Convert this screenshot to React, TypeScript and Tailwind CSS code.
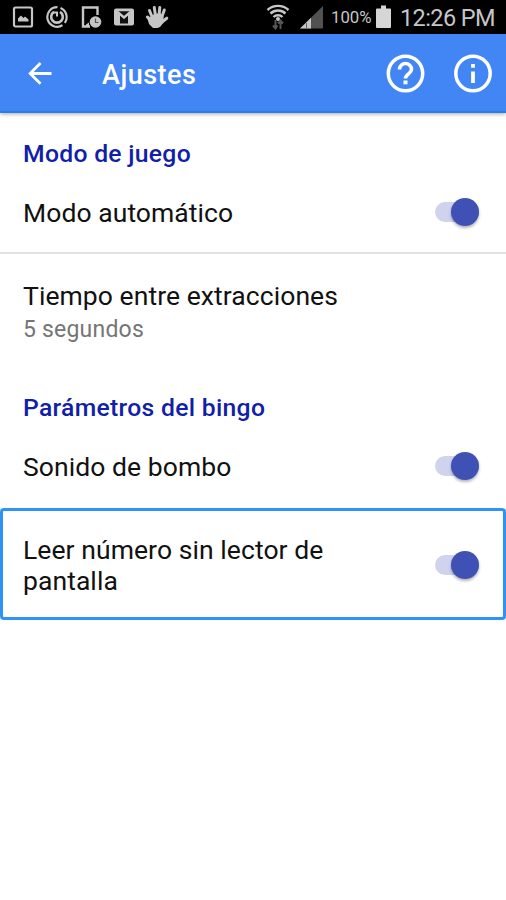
import React from 'react';

interface SwitchRowProps {
  label: string;
  className?: string;
}

const StatusBar: React.FC = () => (
  <div className="flex h-[34px] items-center bg-black pl-[12px] pr-[12px] text-[#c6c6c6]">
    <svg className="mr-[11px] h-[24px] w-[22px]" viewBox="0 0 22 24" fill="none">
      <rect x="2" y="2.5" width="18" height="19" rx="1.5" stroke="currentColor" strokeWidth="2.2" />
      <path d="M6 16.5v-3l3-3 2.5 2.5 1.5-1.5 3.5 3v2z" fill="currentColor" />
    </svg>
    <svg className="mr-[12px] h-[24px] w-[24px]" viewBox="0 0 24 24" fill="none" stroke="currentColor">
      <path d="M12.5 2.2A9.8 9.8 0 1 0 17.5 20.2" strokeWidth="2.2" />
      <path d="M15.5 3A9.8 9.8 0 0 1 19.8 17.8" strokeWidth="2.2" />
      <path d="M9 6.9A5.8 5.8 0 1 0 15 6.9" strokeWidth="2.6" />
      <path d="M8.5 7.5H13M12 6.5v5" strokeWidth="2" />
    </svg>
    <svg className="mr-[10px] h-[24px] w-[22px]" viewBox="0 0 22 24" fill="none">
      <path d="M16.5 10V2.5H2V21.5H9" stroke="currentColor" strokeWidth="2.4" />
      <path d="M5 19.5l3-2v4H5z" fill="currentColor" />
      <circle cx="14.5" cy="17" r="5.8" fill="currentColor" />
      <path d="M14.5 13.5v4h3" stroke="#555" strokeWidth="1.2" />
    </svg>
    <svg className="mr-[10px] h-[24px] w-[22px]" viewBox="0 0 22 24" fill="none">
      <rect x="1" y="3.5" width="20" height="17" rx="2" fill="currentColor" />
      <path d="M4 6.2h14L11 11.8z" fill="#111" />
      <path d="M7 10.5l4 3.5 4-3.500V18.500H7z" fill="#111" />
      <path d="M4 6.500l7 5.800 7-5.800" stroke="currentColor" strokeWidth="2.400" />
    </svg>
    <svg className="h-[24px] w-[24px]" viewBox="0 0 24 24" fill="none" stroke="currentColor" strokeLinecap="round">
      <path d="M7.5 13L4.5 5.5M10.5 11L9.3 2.5M14 11l.8-8.5M16.5 13l2.8-8M17 17l4.8-3.8M7 16l-4.600-4" strokeWidth="3" />
      <path d="M6 11.5l4-3h5.5l3 3v3l1 2-4.500 5.500-2.500 1h-4.500l-4-4-1.500-5z" fill="currentColor" stroke="none" />
    </svg>
    <svg className="ml-auto mr-[10px] h-[26px] w-[24px]" viewBox="0 0 24 26" fill="none">
      <path d="M1.5 6a15.5 15.5 0 0 1 21 0M4.5 9.5a11 11 0 0 1 15 0M7.5 13a6.5 6.5 0 0 1 9 0" stroke="currentColor" strokeWidth="2.4" />
      <circle cx="12" cy="15" r="2" fill="currentColor" />
      <path d="M9.5 16v8m-2.500-2.500l2.500 3 2-3M14.500 25v-8m-2.500 2.500l2.500-3 2.500 3" stroke="#555" strokeWidth="2" />
    </svg>
    <svg className="mr-[8px] h-[23px] w-[23px]" viewBox="0 0 23 23">
      <path d="M0 22.5L23 0v22.5z" fill="#515151" />
      <path d="M0 22.5L11 11.7v10.8z" fill="currentColor" />
      <path d="M6.5 17v5.5" stroke="#666" strokeWidth="1" />
    </svg>
    <span className="w-[45px] whitespace-nowrap pt-px text-[16.8px] leading-none">100%</span>
    <svg className="mr-[9px] h-[24px] w-[15px]" viewBox="0 0 15 24">
      <path d="M5 0.5h5v3h4a1 1 0 0 1 1 1V22a1 1 0 0 1-1 1H1a1 1 0 0 1-1-1V4.500a1 1 0 0 1 1-1h4z" fill="#d6d6d6" />
    </svg>
    <span className="w-[94px] whitespace-nowrap pt-[3px] text-[23.5px] leading-none tracking-[-0.6px]">12:26 PM</span>
  </div>
);

const Header: React.FC = () => (
  <header className="relative z-10 flex h-[79px] items-center border-b-2 border-[#2b7de0] bg-[#4285f4] pl-[28px] pr-[13px] text-white shadow-[0_1px_4px_rgba(0,0,0,0.35)]">
    <button aria-label="Volver">
      <svg className="h-[24px] w-[24px]" viewBox="0 0 24 24" fill="none" stroke="currentColor" strokeWidth="2.8">
        <path d="M23.5 12.5H3M12.5 2L2.2 12.5l10.3 10.3" />
      </svg>
    </button>
    <h1 className="ml-[50px] pt-[6px] text-[27px] font-medium leading-none tracking-[0.5px]">Ajustes</h1>
    <button aria-label="Ayuda" className="ml-auto">
      <svg className="h-[40px] w-[40px]" viewBox="0 0 40 40" fill="none" stroke="currentColor">
        <circle cx="19.5" cy="20.5" r="17.2" strokeWidth="3.5" />
        <path d="M13.5 16.5a6 6 0 1 1 12 0c0 4.200-6 4.600-6 9" strokeWidth="3.6" />
        <path d="M19.5 27.5v3.8" strokeWidth="4" />
      </svg>
    </button>
    <button aria-label="Información" className="ml-[27px]">
      <svg className="h-[40px] w-[40px]" viewBox="0 0 40 40" fill="none" stroke="currentColor">
        <circle cx="20" cy="20.5" r="17.2" strokeWidth="3.5" />
        <path d="M20 11v3.8M20 18.500v11.500" strokeWidth="3.8" />
      </svg>
    </button>
  </header>
);

const Switch: React.FC = () => (
  <button role="switch" aria-checked="true" className="flex h-[20px] w-[44px] items-center rounded-full bg-[#d0d3ee]">
    <span className="ml-auto h-[28px] w-[28px] rounded-full bg-[#3f51b5] shadow-[0_2px_3px_rgba(0,0,0,0.3)]" />
  </button>
);

const SectionTitle: React.FC<{ children: React.ReactNode }> = ({ children }) => (
  <h2 className="px-[23px] pb-[3px] pt-[25px] text-[24.7px] font-medium leading-[31px] tracking-[0.3px] text-[#1020a8]">{children}</h2>
);

const SwitchRow: React.FC<SwitchRowProps> = ({ label, className = 'h-[80px]' }) => (
  <div className={`flex items-center justify-between pl-[23px] pr-[27px] ${className}`}>
    <span className="w-[340px] text-[26.5px] leading-[31px] tracking-[0.07px]">{label}</span>
    <Switch />
  </div>
);

export default function App() {
  return (
    <div className="h-[900px] w-[506px] overflow-hidden bg-white font-['Roboto',sans-serif] text-[#111]">
      <StatusBar />
      <Header />
      <main>
        <section>
          <SectionTitle>Modo de juego</SectionTitle>
          <SwitchRow label="Modo automático" />
          <div className="h-[115px] border-t-2 border-[#e0e0e0] px-[23px] pt-[26px]">
            <p className="text-[26.5px] leading-[31px] tracking-[0.07px]">Tiempo entre extracciones</p>
            <p className="mt-[5px] text-[23px] leading-[28px] tracking-[0.2px] text-[#757575]">5 segundos</p>
          </div>
        </section>
        <section>
          <SectionTitle>Parámetros del bingo</SectionTitle>
          <SwitchRow label="Sonido de bombo" />
          <div className="mt-[2px] rounded-[4px] border-[3px] border-[#2d93f5]">
            <SwitchRow label="Leer número sin lector de pantalla" className="-mx-[3px] h-[106px] pt-px" />
          </div>
        </section>
      </main>
    </div>
  );
}
